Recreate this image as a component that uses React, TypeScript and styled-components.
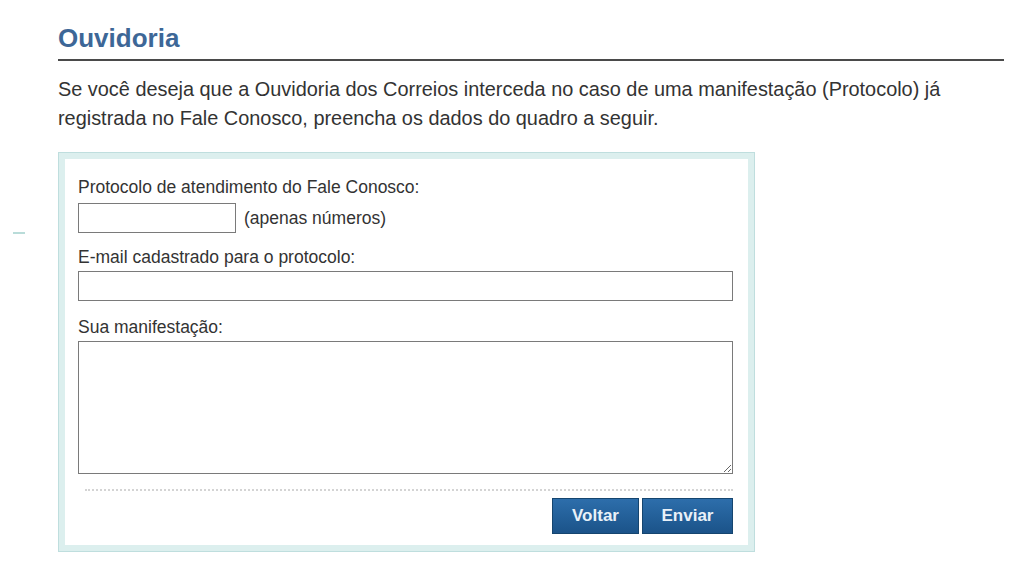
import styled, { createGlobalStyle } from "styled-components";

const GlobalStyle = createGlobalStyle`
  html, body {
    margin: 0;
    padding: 0;
    background: #ffffff;
    font-family: "Liberation Sans", Arial, sans-serif;
  }
`;

const Page = styled.div`
  position: relative;
  width: 1024px;
  height: 576px;
  box-sizing: border-box;
  padding: 23px 20px 0 58px;
  overflow: hidden;
`;

const Mark = styled.span`
  position: absolute;
  left: 13px;
  top: 232px;
  width: 12px;
  height: 2px;
  background: #b9dcd9;
`;

const Title = styled.h1`
  margin: 0;
  padding-bottom: 5px;
  font-size: 26px;
  line-height: 31px;
  font-weight: bold;
  color: #3d6797;
  border-bottom: 2px solid #4a4a4a;
`;

const Intro = styled.p`
  margin: 14px 0 0;
  font-size: 19.9px;
  line-height: 29px;
  color: #333333;
  width: 930px;
`;

const FormBox = styled.form`
  margin-top: 19px;
  width: 697px;
  height: 400px;
  box-sizing: border-box;
  border: 1px solid #bfdede;
  background: #ffffff;
  box-shadow: inset 0 0 0 6px #dcefee;
  padding: 24px 22px 0 19px;
  display: flex;
  flex-direction: column;
`;

const Label = styled.label<{ $gap?: number }>`
  display: block;
  font-size: 17.5px;
  line-height: 20px;
  color: #333333;
  margin-top: ${(p) => p.$gap ?? 0}px;
`;

const Row = styled.div`
  display: flex;
  align-items: center;
  gap: 8px;
  margin-top: 6px;
`;

const Hint = styled.span`
  font-size: 17.5px;
  color: #333333;
`;

const Field = styled.input<{ $width: number }>`
  width: ${(p) => p.$width}px;
  height: 30px;
  box-sizing: border-box;
  border: 1px solid #7a7a7a;
  background: #fff;
  margin: 0;
  padding: 2px 4px;
  font-family: inherit;
  font-size: 15px;
`;

const WideField = styled(Field)`
  display: block;
  margin-top: 4px;
`;

const Message = styled.textarea`
  display: block;
  width: 655px;
  height: 133px;
  box-sizing: border-box;
  border: 1px solid #7a7a7a;
  margin: 4px 0 0;
  padding: 4px;
  font-family: inherit;
  font-size: 15px;
  resize: both;
`;

const Separator = styled.div`
  margin: 15px 0 0 7px;
  width: 648px;
  border-top: 2px dotted #d4d4d4;
`;

const Actions = styled.div`
  display: flex;
  justify-content: flex-end;
  gap: 3px;
  width: 655px;
  margin-top: 7px;
`;

const Button = styled.button<{ $width: number }>`
  width: ${(p) => p.$width}px;
  height: 36px;
  border: 1px solid #15456f;
  background: linear-gradient(#2d6eab, #1b5389);
  color: #e9f1f8;
  font-family: "Liberation Sans", Arial, sans-serif;
  font-size: 17px;
  font-weight: bold;
  padding: 0;
  cursor: pointer;
`;

export default function App() {
  return (
    <>
      <GlobalStyle />
      <Page>
        <Mark />
        <Title>Ouvidoria</Title>
        <Intro>
          Se você deseja que a Ouvidoria dos Correios interceda no caso de uma manifestação (Protocolo) já
          registrada no Fale Conosco, preencha os dados do quadro a seguir.
        </Intro>
        <FormBox onSubmit={(e) => e.preventDefault()}>
          <Label htmlFor="protocolo">Protocolo de atendimento do Fale Conosco:</Label>
          <Row>
            <Field id="protocolo" $width={158} />
            <Hint>(apenas números)</Hint>
          </Row>
          <Label htmlFor="email" $gap={14}>E-mail cadastrado para o protocolo:</Label>
          <WideField id="email" $width={655} />
          <Label htmlFor="msg" $gap={16}>Sua manifestação:</Label>
          <Message id="msg" />
          <Separator />
          <Actions>
            <Button type="button" $width={87}>Voltar</Button>
            <Button type="submit" $width={91}>Enviar</Button>
          </Actions>
        </FormBox>
      </Page>
    </>
  );
}
